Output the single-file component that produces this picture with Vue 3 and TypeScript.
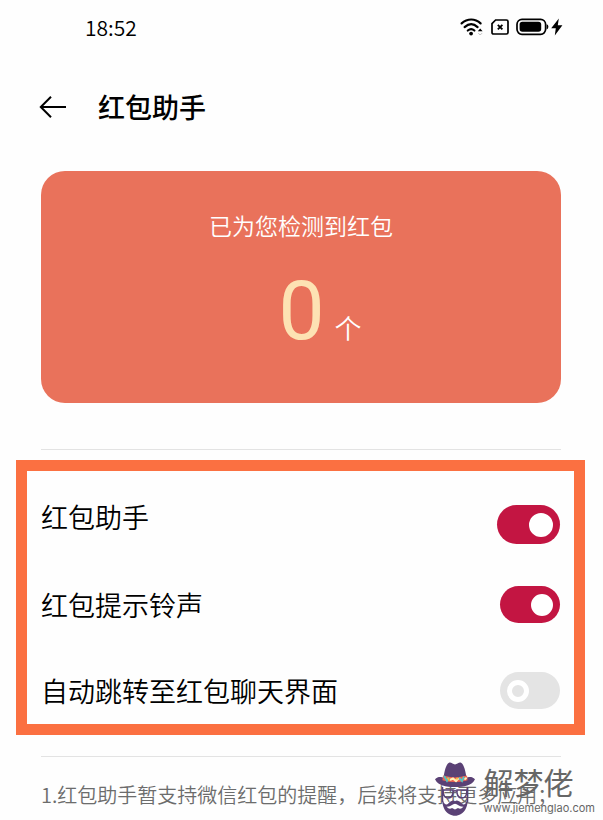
<script setup lang="ts">
import { ref } from 'vue'

interface Option {
  id: string
  label: string
  on: boolean
  primary?: boolean
}

const detected = ref<number>(0)

const options = ref<Option[]>([
  { id: 'assistant', label: '红包助手', on: true, primary: true },
  { id: 'ringtone', label: '红包提示铃声', on: true },
  { id: 'jump', label: '自动跳转至红包聊天界面', on: false },
])
</script>

<template>
  <div class="screen">
    <div class="status">
      <time class="clock">18:52</time>
      <div class="indicators">
        <svg class="wifi" viewBox="0 0 24 18" width="24" height="18" aria-hidden="true">
          <g fill="none" stroke="#000" stroke-width="2.2" stroke-linecap="round">
            <path d="M1.6 5.4C7.4.2 15 .2 20.6 5.4" />
            <path d="M4.6 9.1C8.8 5.4 13.6 5.4 17.6 9.1" />
            <path d="M7.8 12.5C10 10.7 12.3 10.7 14.4 12.5" />
          </g>
          <circle cx="11.1" cy="15.6" r="1.9" />
          <path d="M17.8 13.3L20.2 10.6L22.6 13.3Z" />
          <path d="M18.4 15.2L20.2 17L22 15.2" fill="none" stroke="#bbb" />
        </svg>
        <svg class="sim" viewBox="0 0 18 16" width="18" height="16" aria-hidden="true">
          <path d="M4.6 1H15.4Q17 1 17 2.6V13.4Q17 15 15.4 15H2.6Q1 15 1 13.4V4.6Z" fill="none" stroke="#000" stroke-width="1.7" />
          <path d="M6.8 5.8L11.4 10.4M11.4 5.8L6.8 10.4" stroke="#000" stroke-width="1.8" />
        </svg>
        <svg class="battery" viewBox="0 0 47 18" width="47" height="18" aria-hidden="true">
          <rect x="1" y="1.3" width="28.6" height="15" rx="5" fill="none" stroke="#000" stroke-width="1.7" />
          <rect x="3.6" y="3.8" width="21.6" height="10" rx="2.8" />
          <path d="M30.6 6.2Q32.4 6.4 32.4 8.8T30.6 11.4Z" />
          <path d="M42.8.4L35.2 10.2H39.8L38.8 17.4L46.4 7.2H41.8Z" />
        </svg>
      </div>
    </div>

    <header class="bar">
      <button class="back" type="button" aria-label="返回">
        <svg viewBox="0 0 28 24" width="28" height="24" aria-hidden="true">
          <path d="M12 1.8L1.8 12L12 22.2M1.8 12H27" fill="none" stroke="#000" stroke-width="2" />
        </svg>
      </button>
      <h1 class="title">红包助手</h1>
    </header>

    <main>
      <section class="card">
        <p class="caption">已为您检测到红包</p>
        <p class="count">
          <span class="number">{{ detected }}</span>
          <span class="unit">个</span>
        </p>
      </section>

      <hr class="rule" />

      <section class="options">
        <label
          v-for="option in options"
          :key="option.id"
          class="option"
          :class="{ primary: option.primary }"
          :for="option.id"
        >
          <span class="name">{{ option.label }}</span>
          <input :id="option.id" v-model="option.on" class="switch" type="checkbox" role="switch" />
        </label>
      </section>

      <hr class="rule" />

      <p class="note">1.红包助手暂支持微信红包的提醒，后续将支持更多应用；</p>
    </main>

    <div class="brand">
      <svg class="logo" viewBox="0 0 42 56" width="42" height="56" aria-hidden="true">
        <path d="M9.5 17C10.5 10 12 3.5 15 1.8C17 .6 18.8 3.4 21 3.4S25 .6 27 1.8C30 3.5 31.5 10 32.5 17Z" fill="#5a4175" />
        <path d="M1 18.2C4 14.8 8 16.2 9.5 16.5H32.5C34 16.2 38 14.8 41 18.2C38 24.5 30 26 21 26S4 24.5 1 18.2Z" fill="#5a4175" />
        <path d="M9 14.6Q21 18.2 33 14.6L33.6 19.2Q21 23 8.4 19.2Z" fill="#ef6351" />
        <path d="M10 15L13 19.8L15 16.4M25 16.6L28 20L30 15.8" fill="none" stroke="#56c0c2" stroke-width="2" />
        <path d="M16 19L19 17.4L22 20L24.5 17.4M30.5 18.6L32.6 16.6" fill="none" stroke="#fff0b8" stroke-width="2" />
        <path d="M13.5 16.6L15.5 19.8M22 17.6H24" fill="none" stroke="#f3bd3c" stroke-width="1.6" />
        <g fill="none" stroke="#5a4175" stroke-width="1.5">
          <path d="M8.5 26V41M33.5 26V41" />
          <path d="M9 29H19V32Q18 37 14 37T9.4 32ZM23 29H33L32.6 32Q32 37 28 37T23 32Z" />
          <path d="M19 30.5Q21 29 23 30.5" />
        </g>
        <path d="M8 36C9 41 10.5 43.6 12.5 43.4C14.5 43 15 41 17 40.2C19 39.2 20 39.6 21 40.3C22 39.6 23 39.2 25 40.2C27 41 27.5 43 29.5 43.4C31.5 43.6 33 41 34 36C34 46 31 50.5 27 53C23 55.4 19 55.4 15 53C11 50.5 8 46 8 36Z" fill="#5a4175" />
        <path d="M12.6 45.6C16 46.4 18.6 42.8 21 42.8S26 46.4 29.4 45.6C27.6 48.4 25.4 48.2 24 47L21 48.4L18 47C16.6 48.2 14.4 48.4 12.6 45.6Z" fill="#fff" />
      </svg>
      <div class="words">
        <strong class="mark">解梦佬</strong>
        <span class="site">www.jiemenglao.com</span>
      </div>
    </div>
  </div>
</template>

<style>
body {
  margin: 0;
  background: #fefefe;
}
</style>

<style scoped>
.screen {
  position: relative;
  box-sizing: border-box;
  min-height: 100vh;
  overflow: hidden;
  background: #fefefe;
  color: #000;
  font-family: "Noto Sans CJK SC", "Noto Sans", sans-serif;
}

.status {
  display: flex;
  align-items: center;
  justify-content: space-between;
  height: 54px;
  padding: 0 40px 0 85px;
}

.clock {
  font-size: 21px;
  font-weight: 350;
  line-height: 24px;
}

.indicators {
  display: flex;
  align-items: center;
  gap: 7px;
}

.bar {
  display: flex;
  align-items: center;
  gap: 31px;
  height: 106px;
  padding: 0 40px 0 39px;
}

.back {
  display: flex;
  padding: 0;
  border: 0;
  background: none;
  cursor: pointer;
}

.title {
  margin: 0;
  font-size: 27px;
  font-weight: 500;
  line-height: 40px;
}

.card {
  box-sizing: border-box;
  min-height: 232px;
  margin: 11px 42px 0 41px;
  padding: 38px 0 0;
  border-radius: 24px;
  background: #e9725b;
  color: #fff;
  text-align: center;
}

.caption {
  margin: 0;
  font-size: 23px;
  font-weight: 350;
  line-height: 32px;
}

.count {
  display: flex;
  align-items: baseline;
  justify-content: center;
  gap: 10px;
  margin: 22px 0 0 38px;
}

.number {
  color: #fde2b3;
  font-family: Roboto, sans-serif;
  font-size: 82px;
  font-weight: 400;
  line-height: 96px;
}

.unit {
  font-size: 27px;
  font-weight: 350;
  line-height: 32px;
}

.rule {
  height: 1px;
  margin: 46px 42px 0 41px;
  border: 0;
  background: #e3e3e3;
}

.options {
  display: flex;
  flex-direction: column;
  gap: 35px;
  margin: 10px 18px 0 16px;
  padding: 27px 14px 8px;
  border: 11px solid #fb7041;
}

.option {
  display: flex;
  align-items: center;
  justify-content: space-between;
  height: 51px;
  cursor: pointer;
}

.option.primary {
  align-items: flex-start;
  height: 46px;
}

.name {
  font-size: 27px;
  font-weight: 350;
  line-height: 38px;
}

.switch {
  appearance: none;
  display: flex;
  align-items: center;
  box-sizing: border-box;
  width: 60px;
  height: 37px;
  margin: 0;
  padding: 0 7px;
  border-radius: 20px;
  background: #e4e4e4;
  cursor: pointer;
}

.switch::before {
  content: "";
  box-sizing: border-box;
  width: 22px;
  height: 22px;
  border: 5px solid #fff;
  border-radius: 50%;
}

.switch:checked {
  justify-content: flex-end;
  background: #c31542;
}

.switch:checked::before {
  background: #fff;
}

.primary .switch {
  align-self: flex-end;
  width: 63px;
  height: 39px;
}

.primary .switch::before {
  width: 24px;
  height: 24px;
}

.options + .rule {
  margin-top: 21px;
}

.note {
  margin: 24px 41px 0;
  color: #6c6c6c;
  font-size: 20px;
  font-weight: 350;
  line-height: 28px;
  white-space: nowrap;
}

.brand {
  position: absolute;
  right: 8px;
  bottom: 3px;
  display: flex;
  align-items: flex-start;
  gap: 7px;
  color: #666;
}

.words {
  display: flex;
  flex-direction: column;
  gap: 3px;
  padding-top: 3px;
}

.mark {
  font-size: 30px;
  font-weight: 400;
  line-height: 34px;
}

.site {
  font-family: Inter, sans-serif;
  font-size: 11px;
  line-height: 14px;
}
</style>
